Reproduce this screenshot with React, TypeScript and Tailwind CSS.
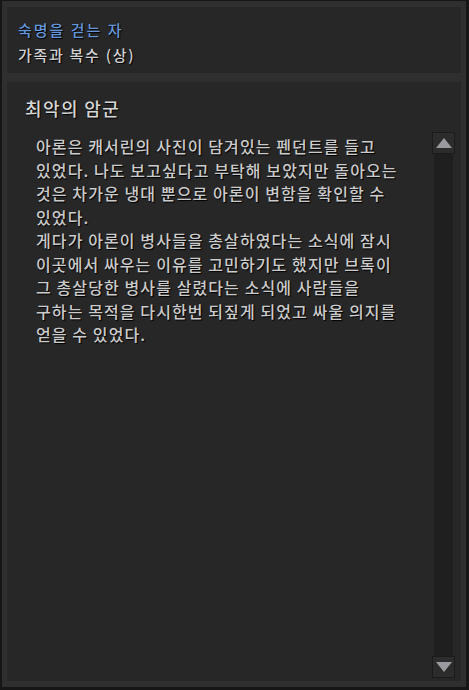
import { useState } from "react";

const BODY_LINES = [
  "아론은 캐서린의 사진이 담겨있는 펜던트를 들고",
  "있었다. 나도 보고싶다고 부탁해 보았지만 돌아오는",
  "것은 차가운 냉대 뿐으로 아론이 변함을 확인할 수",
  "있었다.",
  "게다가 아론이 병사들을 총살하였다는 소식에 잠시",
  "이곳에서 싸우는 이유를 고민하기도 했지만 브록이",
  "그 총살당한 병사를 살렸다는 소식에 사람들을",
  "구하는 목적을 다시한번 되짚게 되었고 싸울 의지를",
  "얻을 수 있었다.",
];

function ScrollButton({ dir }: { dir: "up" | "down" }) {
  return (
    <div className="w-[23px] h-[22px] border border-[#1b1b1b] bg-[#2c2c2c] flex items-center justify-center">
      <svg width="16" height="10" viewBox="0 0 16 10">
        {dir === "up" ? (
          <polygon points="8,0 16,10 0,10" fill="#9b9b9f" />
        ) : (
          <polygon points="0,0 16,0 8,10" fill="#9b9b9f" />
        )}
      </svg>
    </div>
  );
}

function App() {
  const [lines] = useState(BODY_LINES);

  return (
    <div
      className="w-[469px] h-[690px] bg-[#161616] pt-px pl-[2px] pr-[3px] pb-[3px]"
      style={{ fontFamily: '"Noto Sans CJK KR", "Noto Sans", sans-serif' }}
    >
      <div className="w-full h-full bg-[#2f2f2f] pt-[6px] pl-[5px] pr-[5px] pb-[6px] flex flex-col gap-[9px] font-medium [text-shadow:1px_1px_1px_#000]">
        <div className="h-[66px] bg-[#272727] pl-[11px] pt-[13px]">
          <div className="text-[15px] leading-[20px] tracking-[2px] text-[#6596dc]">숙명을 걷는 자</div>
          <div className="text-[15px] leading-[20px] tracking-[1.7px] text-[#d0d0d0] mt-[5px]">가족과 복수 (상)</div>
        </div>

        <div className="flex-1 bg-[#272727] flex">
          <div className="flex-1 pl-[18px] pt-[14px]">
            <div className="text-[18px] leading-[24px] tracking-[1.4px] text-[#d6d6d6]">최악의 암군</div>
            <div className="pl-[11px] pt-[15px] text-[16px] leading-[23.5px] tracking-[1.1px] text-[#cbcbcb]">
              {lines.map((l, i) => (
                <div key={i} className="whitespace-nowrap">{l}</div>
              ))}
            </div>
          </div>
          <div className="w-[23px] mr-[6px] pt-[50px] pb-[3px] flex flex-col">
            <ScrollButton dir="up" />
            <div className="flex-1 mx-[2px] bg-[#1f1f1f]" />
            <ScrollButton dir="down" />
          </div>
        </div>
      </div>
    </div>
  );
}

export default App;
